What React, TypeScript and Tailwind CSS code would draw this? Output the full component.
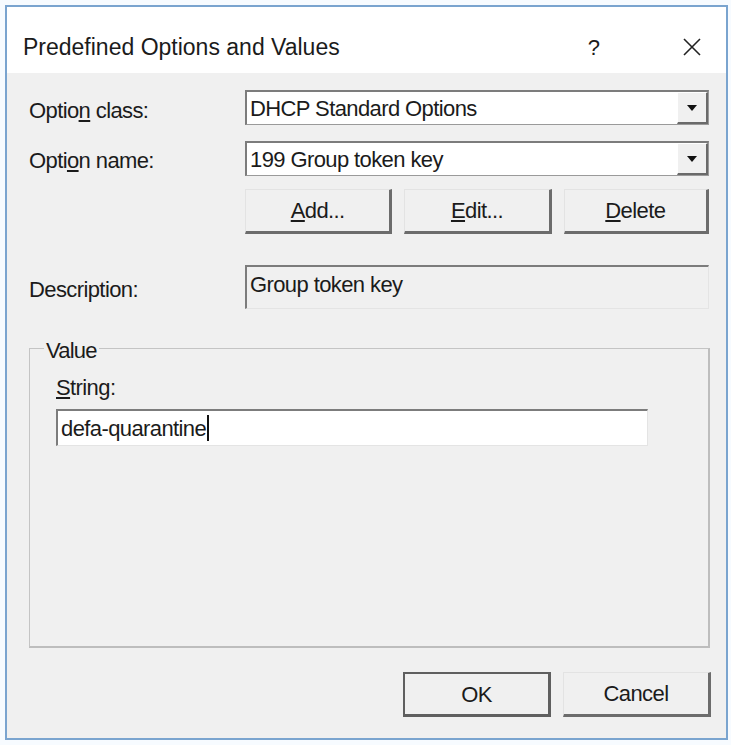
import React from 'react';

const FONT = { fontFamily: '"Liberation Sans", Arial, sans-serif' };

function Combo({ value }: { value: string }) {
  return (
    <div className="flex h-[35px] w-[464px] border-t-2 border-l-2 border-[#7c7c7c] border-r border-b border-r-[#9a9a9a] border-b-[#9a9a9a] bg-white">
      <div className="flex flex-1 items-center pl-[3px] text-[22px] tracking-[-0.6px] text-[#1b1b1b]">{value}</div>
      <div className="flex w-[31px] items-center justify-center border-l border-t border-white border-r-2 border-b-2 border-r-[#6a6a6a] border-b-[#6a6a6a] bg-[#f0f0f0]">
        <svg width="12" height="8" viewBox="0 0 12 8">
          <path d="M1 1h10L6 7z" fill="#111" />
        </svg>
      </div>
    </div>
  );
}

function Btn({ children, def = false, w = 'w-[148px]' }: { children: React.ReactNode; def?: boolean; w?: string }) {
  return (
    <div
      className={`flex h-[45px] ${w} items-center justify-center bg-[#f0f0f0] text-[22px] tracking-[-0.6px] text-[#1b1b1b] ${
        def
          ? 'border-2 border-[#5f5f5f] border-r-[3px] border-b-[3px]'
          : 'border-t border-l border-t-[#e3e3e3] border-l-[#e3e3e3] border-r-[3px] border-b-[3px] border-r-[#6c6c6c] border-b-[#6c6c6c]'
      }`}
    >
      {children}
    </div>
  );
}

export default function App() {
  return (
    <div className="h-[745px] w-[731px] bg-[#f7fbff] pl-[5px] pt-[5px] pr-[3px] pb-[5px]" style={FONT}>
      <div className="flex h-full flex-col border-2 border-[#7aa4cf]">
        {/* title bar */}
        <div className="flex h-[66px] items-center bg-white pl-[16px] pt-[14px] text-[23px] text-[#1b1b1b]">
          <span className="flex-1">Predefined Options and Values</span>
          <span className="mr-[82px] text-[22px]">?</span>
          <svg width="20" height="20" viewBox="0 0 20 20" className="mr-[24px]">
            <path d="M2 2L18 18M18 2L2 18" stroke="#222" strokeWidth="1.6" />
          </svg>
        </div>

        <div className="flex flex-1 flex-col bg-[#f0f0f0] pl-[22px] pr-[15px] pt-[17px] text-[#1b1b1b]">
          <div className="grid grid-cols-[216px_464px] items-center gap-y-[16px] text-[22px] tracking-[-0.6px]">
            <span className="translate-y-[3px]">
              Optio<u>n</u> class:
            </span>
            <Combo value="DHCP Standard Options" />
            <span className="translate-y-[2px]">
              Opti<u>o</u>n name:
            </span>
            <Combo value="199 Group token key" />
            <span />
            <div className="-mt-[3px] flex gap-[12px]">
              <Btn>
                <u>A</u>dd...
              </Btn>
              <Btn>
                <u>E</u>dit...
              </Btn>
              <Btn w="w-[146px]">
                <u>D</u>elete
              </Btn>
            </div>
            <span className="mt-[15px] translate-y-[2px]">Description:</span>
            <div className="mt-[15px] flex h-[44px] items-start border-t-2 border-l-2 border-[#7c7c7c] border-r border-b border-r-[#e4e4e4] border-b-[#e4e4e4] pl-[3px] pt-[1px]">
              Group token key
            </div>
          </div>

          {/* Value group */}
          <div className="relative mt-[39px] h-[300px] w-[681px] border border-[#c4c4c4] border-r-2 border-b-2 border-r-[#bdbdbd] border-b-[#bdbdbd] px-[26px] pt-[22px]">
            <span className="absolute -top-[15px] left-[14px] bg-[#f0f0f0] px-[2px] text-[22px] tracking-[-0.8px]">Value</span>
            <div className="text-[22px] tracking-[-0.6px]">
              <u>S</u>tring:
            </div>
            <div className="mt-[5px] flex h-[37px] w-[592px] items-center border-t-2 border-l-2 border-[#7c7c7c] border-r border-b border-r-[#e4e4e4] border-b-[#e4e4e4] bg-white pl-[3px] text-[22px] tracking-[-0.6px]">
              defa-quarantine
              <span className="ml-[1px] h-[26px] w-[2px] bg-[#111]" />
            </div>
          </div>

          <div className="mt-[24px] flex justify-end gap-[12px]">
            <Btn def>OK</Btn>
            <Btn>Cancel</Btn>
          </div>
        </div>
      </div>
    </div>
  );
}
